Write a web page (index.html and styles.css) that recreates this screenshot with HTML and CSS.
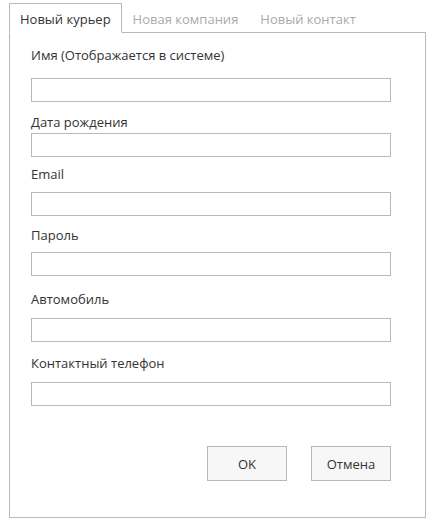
FILE: index.html
```html
<!DOCTYPE html>
<html lang="ru">
<head>
<meta charset="utf-8">
<link rel="stylesheet" href="styles.css">
</head>
<body>
<div class="dialog">
  <div class="tabs">
    <div class="tab tab--active">Новый курьер</div>
    <div class="tab">Новая компания</div>
    <div class="tab">Новый контакт</div>
  </div>
  <div class="panel">
    <div class="field field--name">
      <label class="label">Имя (Отображается в системе)</label>
      <input class="input" type="text">
    </div>
    <div class="field field--dob">
      <label class="label">Дата рождения</label>
      <input class="input" type="text">
    </div>
    <div class="field field--email">
      <label class="label">Email</label>
      <input class="input" type="text">
    </div>
    <div class="field field--pass">
      <label class="label">Пароль</label>
      <input class="input" type="text">
    </div>
    <div class="field field--car">
      <label class="label">Автомобиль</label>
      <input class="input" type="text">
    </div>
    <div class="field field--phone">
      <label class="label">Контактный телефон</label>
      <input class="input" type="text">
    </div>
    <div class="actions">
      <button class="btn">OK</button>
      <button class="btn">Отмена</button>
    </div>
  </div>
</div>
</body>
</html>
```
FILE: styles.css
```css
html, body {
  margin: 0;
  padding: 0;
  background: #ffffff;
}
body {
  font-family: "Open Sans", "Noto Sans", sans-serif;
  font-size: 13px;
  color: #333333;
}
.dialog {
  padding: 3px 0 0 9px;
  width: 417px;
}
.tabs {
  display: flex;
  margin-bottom: -1px;
  position: relative;
  z-index: 1;
}
.tab {
  padding: 6px 10px 4px 10px;
  line-height: 18px;
  border: 1px solid transparent;
  color: #aaaaaa;
  white-space: nowrap;
}
.tab--active {
  color: #333333;
  border-color: #b8b8b8;
  border-bottom-color: #ffffff;
  background: #ffffff;
}
.panel {
  border: 1px solid #b8b8b8;
  padding: 13px 34px 36px 21px;
  display: flex;
  flex-direction: column;
}
.field {
  display: flex;
  flex-direction: column;
}
.label {
  display: block;
  line-height: 18px;
  margin-bottom: 10px;
}
.input {
  box-sizing: border-box;
  width: 360px;
  height: 24px;
  margin: 0;
  border: 1px solid #b8b8b8;
  border-radius: 0;
  background: #ffffff;
  outline: none;
  padding: 0 4px;
  font: inherit;
}
.field--name .label { margin-bottom: 14px; }
.field--dob { margin-top: 11px; }
.field--dob .label { margin-bottom: 2px; }
.field--email { margin-top: 8px; }
.field--email .label { margin-bottom: 9px; }
.field--pass { margin-top: 10px; }
.field--pass .label { margin-bottom: 8px; }
.field--car { margin-top: 14px; }
.field--phone { margin-top: 12px; }
.actions {
  display: flex;
  justify-content: flex-end;
  gap: 24px;
  margin-top: 40px;
  width: 360px;
}
.btn {
  box-sizing: border-box;
  width: 80px;
  height: 35px;
  margin: 0;
  border: 1px solid #b8b8b8;
  border-radius: 0;
  background: #f7f7f7;
  color: #333333;
  font: inherit;
  padding: 0;
}
```
